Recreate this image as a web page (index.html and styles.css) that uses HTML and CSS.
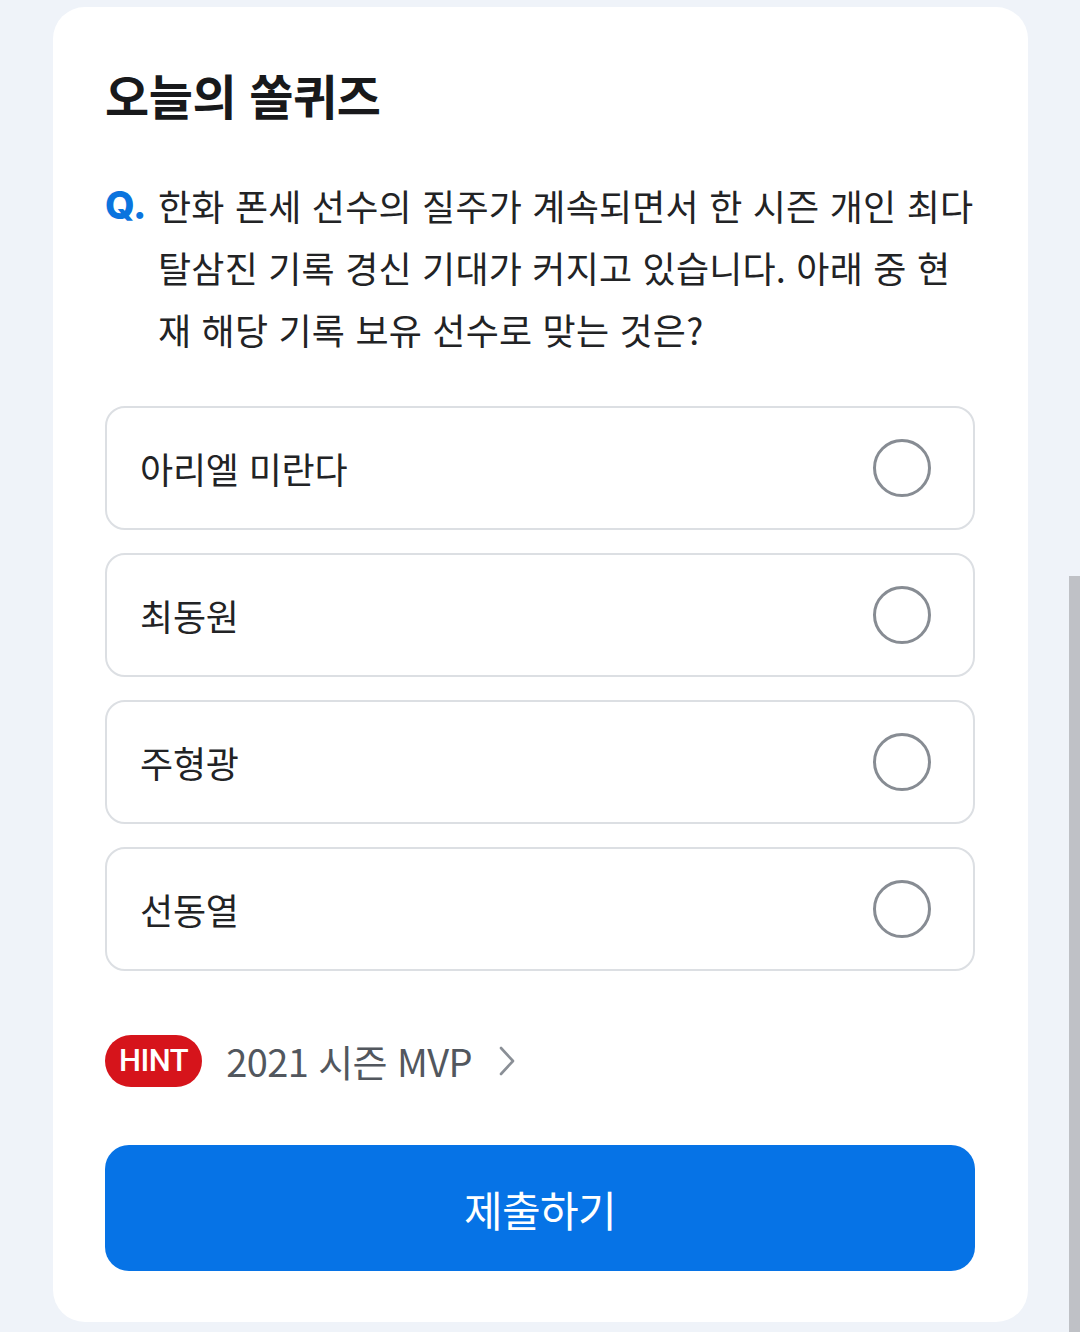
FILE: index.html
```html
<!DOCTYPE html>
<html lang="ko">
<head>
  <title>오늘의 쏠퀴즈</title>
  <meta charset="UTF-8">
  <meta name="viewport" content="width=device-width, initial-scale=1.0">
  <link rel="stylesheet" href="styles.css">
</head>
<body>
  <div class="quiz-card">
    <h1 class="quiz-title">오늘의 쏠퀴즈</h1>

    <div class="question">
      <span class="question-mark">Q.</span>
      <p class="question-text">한화 폰세 선수의 질주가 계속되면서 한 시즌 개인 최다 탈삼진 기록 경신 기대가 커지고 있습니다. 아래 중 현재 해당 기록 보유 선수로 맞는 것은?</p>
    </div>

    <div class="options">
      <label class="option">
        <span class="option-text">아리엘 미란다</span>
        <span class="radio"></span>
      </label>
      <label class="option">
        <span class="option-text">최동원</span>
        <span class="radio"></span>
      </label>
      <label class="option">
        <span class="option-text">주형광</span>
        <span class="radio"></span>
      </label>
      <label class="option">
        <span class="option-text">선동열</span>
        <span class="radio"></span>
      </label>
    </div>

    <div class="hint">
      <span class="hint-badge">HINT</span>
      <span class="hint-text">2021 시즌 MVP</span>
      <svg class="hint-arrow" width="18" height="32" viewBox="0 0 18 32" fill="none">
        <path d="M3 3l12 13L3 29" stroke="#8a8f96" stroke-width="2.6" stroke-linecap="round" stroke-linejoin="round"/>
      </svg>
    </div>

    <button class="submit-button">제출하기</button>
  </div>

  <div class="scroll-thumb"></div>
</body>
</html>
```

FILE: styles.css
```css
body {
  font-family: "Noto Sans CJK KR", "Noto Sans", sans-serif;
  margin: 0;
  padding: 7px 52px 10px 53px;
  background-color: #eff3f9;
  color: #1c1d1f;
}

.quiz-card {
  background-color: #ffffff;
  border-radius: 32px;
  padding: 53px 53px 50px 52px;
  min-height: 1315px;
  box-sizing: border-box;
}

.quiz-title {
  margin: 0;
  font-size: 48px;
  font-weight: 700;
  line-height: 68px;
  color: #18191b;
  letter-spacing: -0.4px;
}

.question {
  display: flex;
  margin-top: 46px;
}

.question-mark {
  flex: none;
  width: 53px;
  font-family: "Inter", "Noto Sans", sans-serif;
  font-size: 38px;
  font-weight: 800;
  line-height: 62px;
  color: #0b74de;
}

.question-text {
  margin: 0;
  font-size: 36px;
  line-height: 62px;
  color: #222325;
  letter-spacing: 0.2px;
}

.options {
  display: flex;
  flex-direction: column;
  gap: 23px;
  margin-top: 46px;
}

.option {
  display: flex;
  align-items: center;
  justify-content: space-between;
  height: 124px;
  padding: 0 42px 0 33px;
  border: 2px solid #dcdfe3;
  border-radius: 20px;
  box-sizing: border-box;
  cursor: pointer;
}

.option-text {
  font-size: 36px;
  color: #222325;
  letter-spacing: -0.2px;
}

.radio {
  width: 52px;
  height: 52px;
  border: 3px solid #878c93;
  border-radius: 50%;
}

.hint {
  display: flex;
  align-items: center;
  margin-top: 62px;
}

.hint-badge {
  display: inline-block;
  padding: 0 14px;
  height: 52px;
  line-height: 52px;
  border-radius: 26px;
  background-color: #d6141b;
  color: #ffffff;
  font-family: "Roboto", "Noto Sans", sans-serif;
  font-size: 31px;
  font-weight: 500;
  letter-spacing: -0.5px;
}

.hint-text {
  margin-left: 24px;
  font-size: 38px;
  color: #52575e;
  letter-spacing: -0.6px;
}

.hint-arrow {
  margin-left: 26px;
}

.submit-button {
  display: block;
  width: 100%;
  height: 126px;
  margin-top: 57px;
  border: none;
  border-radius: 24px;
  background-color: #0673e6;
  color: #ffffff;
  font-family: inherit;
  font-size: 42px;
  letter-spacing: -0.6px;
  cursor: pointer;
}

.scroll-thumb {
  position: fixed;
  right: 0;
  top: 576px;
  bottom: 0;
  width: 11px;
  background-color: #bfc1c6;
}
```
